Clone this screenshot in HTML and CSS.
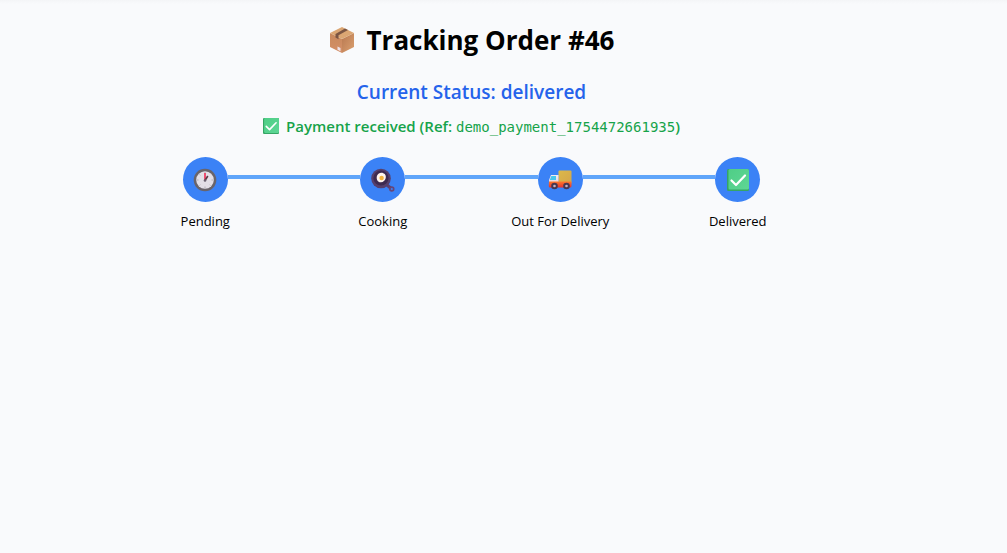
FILE: index.html
```html
<!DOCTYPE html>
<html lang="en">
<head>
<meta charset="utf-8">
<meta name="viewport" content="width=device-width, initial-scale=1">
<title>Tracking Order #46</title>
<link rel="stylesheet" href="styles.css">
</head>
<body>
<svg class="defs" aria-hidden="true">
  <defs>
    <linearGradient id="green" x1="0" y1="0" x2="1" y2="1">
      <stop offset="0" stop-color="#4fce86"/><stop offset="1" stop-color="#5ed695"/>
    </linearGradient>
    <linearGradient id="cab" x1="0" y1="0" x2="0" y2="1">
      <stop offset="0" stop-color="#f4ecf0"/><stop offset="1" stop-color="#e9d5dc"/>
    </linearGradient>
    <linearGradient id="cargo" x1="0" y1="0" x2="1" y2="1">
      <stop offset="0" stop-color="#dcb84a"/><stop offset="1" stop-color="#d4a64a"/>
    </linearGradient>
    <linearGradient id="chassis" x1="0" y1="0" x2="0" y2="1">
      <stop offset="0" stop-color="#ff7a2c"/><stop offset="1" stop-color="#e3302e"/>
    </linearGradient>
    <linearGradient id="box-left" x1="0" y1="0" x2="0" y2="1">
      <stop offset="0" stop-color="#c8895c"/><stop offset="1" stop-color="#d48f68"/>
    </linearGradient>
    <linearGradient id="box-right" x1="0" y1="0" x2="1" y2="1">
      <stop offset="0" stop-color="#b87850"/><stop offset="1" stop-color="#dba070"/>
    </linearGradient>
    <symbol id="check" viewBox="0 0 22 22">
      <rect width="22" height="22" rx="1.5" fill="#36a565"/>
      <rect x="1.5" width="20.5" height="20.5" rx="1.5" fill="url(#green)"/>
      <path d="M4.5 11.5 9 16 18 6.500" fill="none" stroke="#fff" stroke-width="2.200" stroke-linecap="round" stroke-linejoin="round"/>
    </symbol>
  </defs>
</svg>
<main class="page">
  <h1 class="title">
    <svg class="title-icon" viewBox="0 0 26 28" aria-hidden="true">
      <path d="M1 7 13 13v14L1 21z" fill="url(#box-left)"/>
      <path d="M25 7 13 13v14l12-6z" fill="url(#box-right)"/>
      <path d="M13 1 25 7 13 13 1 7z" fill="#dba673"/>
      <path d="M16 2.500 19 4 9.500 9.200v4L6.500 11.500V8z" fill="#7b5543"/>
      <path d="M8.500 20.500 11.500 22v3.300L8.500 23.800z" fill="#eee2e8"/>
    </svg>
    <span>Tracking Order #46</span>
  </h1>
  <p class="status">Current Status: delivered</p>
  <p class="payment">
    <svg class="payment-icon" aria-hidden="true"><use href="#check"/></svg>
    <span>Payment received (Ref: <span class="reference">demo_payment_1754472661935</span>)</span>
  </p>
  <ol class="steps">
    <li class="step">
      <div class="marker">
        <span class="circle">
          <svg class="icon" viewBox="0 0 24 24" aria-hidden="true">
            <circle cx="12" cy="12" r="11.300" fill="#69646a"/>
            <circle cx="12" cy="12" r="8.800" fill="#e3dfe6"/>
            <path d="M12 4v1.500M12 18.500V20M4 12h1.500M18.500 12H20M6.500 6.500l.8.8M16.700 16.700l.8.8M6.500 17.500l.8-.8" stroke="#aaa4ad" stroke-width=".8"/>
            <path d="M12 12.500V5" stroke="#f13d63" stroke-width="1.800"/>
            <path d="M12 12.500 14.800 8" stroke="#5b3a45" stroke-width="1.600"/>
            <circle cx="12" cy="12.500" r="1.300" fill="#6c6270"/>
          </svg>
        </span>
      </div>
      <span class="label">Pending</span>
    </li>
    <li class="step">
      <div class="marker">
        <span class="circle">
          <svg class="icon" viewBox="0 0 24 24" aria-hidden="true">
            <path d="M16 17 19.500 20" stroke="#5a3f70" stroke-width="3"/>
            <circle cx="20.800" cy="21" r="1.900" fill="none" stroke="#66467a" stroke-width="1.700"/>
            <circle cx="10" cy="10.500" r="9.800" fill="#563f6c"/>
            <circle cx="10" cy="10" r="7.600" fill="#3d2a51"/>
            <path d="M5.800 8.500c.5-3 4-4.500 6.500-3.300 2.500.8 3 3.200 2.300 5.300-.8 2-2.300 4-5 3.800C6.800 14.200 5.300 11.500 5.800 8.500z" fill="#fff4ee"/>
            <circle cx="10.600" cy="10" r="2.200" fill="#f3b23e"/>
          </svg>
        </span>
      </div>
      <span class="label">Cooking</span>
    </li>
    <li class="step">
      <div class="marker">
        <span class="circle">
          <svg class="icon" viewBox="0 0 24 24" aria-hidden="true">
            <rect x="10.500" y="2.500" width="13" height="13" rx="1" fill="url(#cargo)"/>
            <path d="M3 7h7.500v8H1v-3z" fill="url(#cab)"/>
            <path d="M3.300 8H8v4H1.800z" fill="#48c6ec"/>
            <path d="M1 13.500h22.500V18q0 1.500-1.500 1.500H2Q.8 19.500.8 18z" fill="url(#chassis)"/>
            <circle cx="6.500" cy="18" r="3.300" fill="#473650"/>
            <circle cx="6.500" cy="18" r="1.300" fill="#c2b4c8"/>
            <circle cx="18.500" cy="18" r="3.300" fill="#473650"/>
            <circle cx="18.500" cy="18" r="1.300" fill="#c2b4c8"/>
          </svg>
        </span>
      </div>
      <span class="label">Out For Delivery</span>
    </li>
    <li class="step">
      <div class="marker">
        <span class="circle">
          <svg class="icon icon-check" aria-hidden="true"><use href="#check"/></svg>
        </span>
      </div>
      <span class="label">Delivered</span>
    </li>
  </ol>
</main>
</body>
</html>
```

FILE: styles.css
```css
* {
  box-sizing: border-box;
}

body {
  margin: 0;
  min-height: 100vh;
  background: linear-gradient(#f4f5f7, #f9fafc 4px);
  color: #000;
  font-family: "Segoe UI", "Open Sans", "Noto Sans", sans-serif;
}

.defs {
  position: absolute;
  width: 0;
  height: 0;
}

.page {
  display: flex;
  flex-direction: column;
  align-items: center;
  padding: 21px 64px 24px 0;
}

.title {
  display: flex;
  align-items: center;
  gap: 12px;
  margin: 0 0 17px;
  font-size: 26px;
  line-height: 38px;
  font-weight: 700;
}

.title-icon {
  width: 26px;
  height: 28px;
}

.status {
  margin: 0 0 7px;
  color: #2563eb;
  font-size: 19px;
  line-height: 32px;
  font-weight: 600;
}

.payment {
  display: flex;
  align-items: center;
  gap: 7px;
  margin: 0 0 20px;
  color: #16a34a;
  font-size: 15px;
  line-height: 22px;
  font-weight: 600;
}

.payment-icon {
  width: 16px;
  height: 16px;
}

.reference {
  font-family: Consolas, "DejaVu Sans Mono", monospace;
  font-size: 14px;
  line-height: 1;
  font-weight: 400;
}

.steps {
  display: grid;
  grid-template-columns: repeat(4, 1fr);
  width: 100%;
  max-width: 710px;
  margin: 0;
  padding: 0;
  list-style: none;
}

.step {
  text-align: center;
}

.marker {
  display: flex;
}

.marker::before,
.marker::after {
  content: "";
  flex: 1;
  height: 4px;
  margin-top: 18px;
  background: #60a5fa;
}

.step:first-child .marker::before,
.step:last-child .marker::after {
  background: none;
}

.circle {
  display: flex;
  align-items: center;
  justify-content: center;
  width: 45px;
  height: 45px;
  border-radius: 50%;
  background: #3b82f6;
}

.icon {
  width: 24px;
  height: 24px;
}

.icon-check {
  width: 22px;
  height: 22px;
}

.label {
  display: block;
  margin-top: 10px;
  font-size: 13px;
  line-height: 18px;
}
```
